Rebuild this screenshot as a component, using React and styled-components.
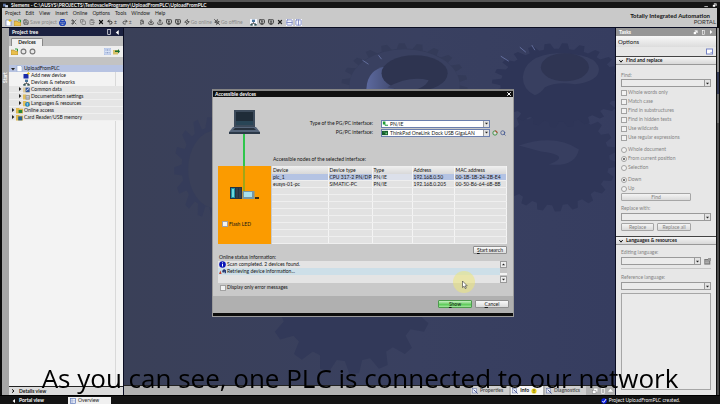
import React, { useState } from "react";
import styled, { createGlobalStyle, css } from "styled-components";
import {
  Scissors,
  Copy,
  ClipboardPaste,
  X,
  Undo2,
  Redo2,
  Download,
  Upload,
  Save,
  Printer,
  Columns2,
  Rows2,
  Zap,
  ZapOff,
  MonitorDown,
  MonitorUp,
  MonitorPlay,
  Binary,
  Search,
} from "lucide-react";

const GlobalStyle = createGlobalStyle`
  * {
    box-sizing: border-box;
  }
  body {
    margin: 0;
    background: #0c0c0c;
    color: #141414;
    font-family: Lato, "Liberation Sans", sans-serif;
    font-size: 5px;
    line-height: 7px;
    overflow: hidden;
  }
  button, input, select, textarea {
    font: inherit;
    color: inherit;
    margin: 0;
    padding: 0;
    border: 0;
    border-radius: 0;
    outline: none;
  }
  svg {
    display: block;
    flex: none;
  }
`;

const Page = styled.div`
  height: 100vh;
  display: flex;
  flex-direction: column;
`;

/* ---- window header ---- */

const TitleBar = styled.header`
  display: flex;
  align-items: center;
  gap: 3px;
  height: 8px;
  padding: 0 3px;
  border-top: 2px solid #555;
  background: #141414;
  color: #f2f2f2;
  font-weight: bold;
  line-height: 6px;
`;

const Spacer = styled.div`
  flex: 1;
`;

const TopArea = styled.div`
  display: flex;
  justify-content: space-between;
  height: 20px;
  margin: 0 3px 0 2px;
  background: #c9c9c9;
  border-bottom: 1px solid #0a0d22;
`;

const MenuBar = styled.nav`
  display: flex;
  gap: 5px;
  height: 10px;
  padding: 2px 3px 0;
`;

const MenuLink = styled.a`
  color: #1c1c1c;
  text-decoration: none;
`;

const ToolBar = styled.div`
  display: flex;
  align-items: center;
  gap: 2px;
  height: 8px;
  padding-left: 3px;
`;

const ToolButton = styled.button`
  display: flex;
  align-items: center;
  gap: 1px;
  height: 7px;
  min-width: 7px;
  background: ${(p) => (p.$on ? "#f4f6ff" : "none")};
  color: ${(p) => p.$color || "#4a4a4a"};
  white-space: nowrap;
`;

const Gap = styled.span`
  width: ${(p) => p.$w || 1}px;
`;

const Brand = styled.div`
  padding: 5px 4px 0 0;
  font-size: 6px;
  line-height: 6px;
  font-weight: bold;
  text-align: right;
`;

const BrandName = styled.div`
  padding-right: 3px;
`;

const BrandPortal = styled.div`
  margin-right: -3px;
  font-weight: normal;
  color: #333;
`;

/* ---- work area ---- */

const Work = styled.div`
  flex: 1;
  min-height: 0;
  display: flex;
  padding: 0 1px 0 2px;
`;

const StartStrip = styled.div`
  width: 7px;
  display: flex;
  align-items: center;
  background: #a6a6a6;
  color: #fff;
  writing-mode: vertical-rl;
  transform: rotate(180deg);
  font-weight: bold;
  justify-content: flex-end;
  padding-bottom: 44px;
`;

const TreePanel = styled.aside`
  flex: 0 0 115px;
  display: flex;
  flex-direction: column;
  background: #f3f3f3;
  border-right: 1px solid #0a0d22;
`;

const PanelHeader = styled.div`
  display: flex;
  align-items: center;
  gap: 3px;
  height: 8px;
  padding: 0 3px;
  background: ${(p) => (p.$muted ? "#969696" : "#1b2140")};
  color: #fff;
  font-weight: bold;
`;

const TabRow = styled.div`
  display: flex;
  align-items: flex-end;
  height: 10px;
  padding-left: 2px;
  background: #bebebe;
`;

const Tab = styled.button`
  height: 8px;
  width: 32px;
  background: #f0f0f0;
  border: 1px solid #888;
  border-bottom: 0;
  border-radius: 1px 2px 0 0;
  font-weight: bold;
  line-height: 7px;
`;

const TreeTools = styled.div`
  display: flex;
  align-items: center;
  gap: 2px;
  height: 11px;
  padding: 0 3px 0 2px;
  background: #efefef;
`;

const GreyBand = styled.div`
  height: 8px;
  background: #c3c3c3;
`;

const Tree = styled.ul`
  flex: 1;
  margin: 0;
  padding: 0 7px 0 0;
  list-style: none;
  background: linear-gradient(#d9d9d9, #d9d9d9) right 7px top / 1px 100% no-repeat;
`;

const TreeRow = styled.li`
  display: flex;
  align-items: center;
  gap: 1px;
  height: 7px;
  margin-right: -7px;
  padding-left: ${(p) => 2 + p.$level * 7}px;
  background: ${(p) => (p.$selected ? "#b7c3e2" : p.$shade ? "#e5e5e5" : "transparent")};
  border-bottom: ${(p) => (p.$shade ? "1px solid #f0f0f0" : "0")};
  white-space: nowrap;
`;

const DetailsRow = styled.div`
  display: flex;
  align-items: center;
  gap: 4px;
  height: 9px;
  padding-left: 2px;
  background: #dcdcdc;
  border-top: 1px solid #222;
  font-weight: bold;
`;

const Centre = styled.main`
  flex: 1;
  min-width: 0;
  display: flex;
  flex-direction: column;
`;

const Canvas = styled.div`
  flex: 1;
  min-height: 0;
  overflow: hidden;
  background: linear-gradient(90deg, #3a4058 0%, #394060 60%, #363d60 100%);
`;

const InfoBar = styled.div`
  display: flex;
  justify-content: flex-end;
  align-items: stretch;
  gap: 2px;
  height: 10px;
  padding-right: 2px;
  background: #b2b2b2;
  border-top: 1px solid #222;
`;

const InfoTab = styled.button`
  display: flex;
  align-items: center;
  gap: 2px;
  padding: 0 6px 0 1px;
  background: ${(p) => (p.$active ? "#f6f6f6" : "#cfcfcf")};
  color: ${(p) => (p.$active ? "#111" : "#555")};
  font-weight: bold;
`;

const InfoTools = styled.div`
  display: flex;
  align-items: center;
  gap: 2px;
  padding-left: 4px;
`;

/* ---- tasks panel ---- */

const TasksPanel = styled.aside`
  flex: 0 0 101px;
  display: flex;
  flex-direction: column;
  background: #e7e7e7;
  border-left: 1px solid #0a0d22;
`;

const OptionsTitle = styled.div`
  height: 11px;
  padding: 2px 2px 0;
  background: linear-gradient(#f8f8f8, #dcdcdc);
  font-size: 6px;
  line-height: 8px;
`;

const OptionsTools = styled.div`
  display: flex;
  justify-content: flex-end;
  align-items: center;
  height: 9px;
  padding-right: 3px;
`;

const SectionTitle = styled.h2`
  display: flex;
  align-items: center;
  gap: 3px;
  height: 9px;
  margin: 0;
  padding: 0 3px;
  background: linear-gradient(#f4f4f4, #d8d8d8);
  border-top: 1px solid #444;
  border-bottom: 1px solid #999;
  font-size: 5px;
  line-height: 7px;
`;

const Form = styled.form`
  display: flex;
  flex-direction: column;
  padding: ${(p) => p.$top}px 5px ${(p) => p.$bottom || 0}px;
  color: #848484;
`;

const FieldLabel = styled.label`
  height: 7px;
  margin-bottom: ${(p) => p.$mb || 0}px;
`;

const FieldRow = styled.div`
  display: flex;
  align-items: center;
  gap: 3px;
`;

const ComboBox = styled.div`
  flex: 1;
  display: flex;
  align-items: center;
  height: 8px;
  border: 1px solid ${(p) => (p.$active ? "#6b7fae" : "#9a9a9a")};
  background: ${(p) => (p.$active ? "#fff" : "#ebebeb")};

  select {
    flex: 1;
    min-width: 0;
    height: 6px;
    padding-left: 2px;
    appearance: none;
    background: none;
    line-height: 6px;
  }
`;

const ComboArrow = styled.span`
  display: flex;
  align-items: center;
  justify-content: center;
  width: 6px;
  align-self: stretch;
  border-left: 1px solid #9a9a9a;
  background: #e2e2e2;
`;

const Choices = styled.fieldset`
  display: flex;
  flex-direction: column;
  margin: 0;
  padding: ${(p) => p.$pad || 1}px 0 0;
  border: 0;
`;

const Choice = styled.label`
  display: flex;
  align-items: center;
  gap: 1px;
  height: 9px;
`;

const Mark = styled.input`
  appearance: none;
  width: 6px;
  height: 6px;
  border: 1px solid #a2a2a2;
  background: #f2f2f2;

  &[type="radio"] {
    border-radius: 50%;
  }
  &[type="radio"]:checked {
    background: radial-gradient(circle, #777 0 1px, #f2f2f2 1px);
  }
`;

const buttonLook = css`
  height: 8px;
  border: 1px solid #a6a6a6;
  border-radius: 1px;
  background: linear-gradient(#f4f4f4, #dadada);
  line-height: 6px;
  text-align: center;
`;

const FormButton = styled.button`
  ${buttonLook}
  width: ${(p) => p.$w}px;
`;

const Rule = styled.hr`
  width: 100%;
  margin: 3px 0 5px;
  border: 0;
  border-top: 1px solid #c6c6c6;
`;

const LanguageBox = styled.textarea`
  flex: 1;
  min-height: 0;
  margin: 3px 5px 5px;
  border: 1px solid #a6a6a6;
  background: #eaeaea;
  resize: none;
`;

const SideTabs = styled.div`
  width: 3px;
  background: linear-gradient(#8d8d8d 0 12%, #323854 12% 18%, #6e6e6e 18% 26%, #4a4a4a 26%);
  border-left: 1px solid #111;
`;

/* ---- bottom line ---- */

const StatusBar = styled.footer`
  display: flex;
  align-items: center;
  height: 9px;
  padding: 1px 40px 0 12px;
  background: #131313;
  border-top: 1px solid #000;
  color: #eee;
`;

const PortalLink = styled.a`
  display: flex;
  align-items: center;
  gap: 3px;
  width: 56px;
  color: #fff;
  font-weight: bold;
  text-decoration: none;
`;

const OverviewTab = styled.button`
  display: flex;
  align-items: center;
  gap: 2px;
  width: 43px;
  height: 7px;
  padding-left: 2px;
  background: #f0f0f0;
  color: #222;
`;

const StatusText = styled.div`
  display: flex;
  align-items: center;
  gap: 2px;
`;

/* ---- dialog ---- */

const Overlay = styled.div`
  position: fixed;
  inset: 0;
  display: flex;
  align-items: center;
  justify-content: center;
  padding: 2px 0 0 6px;
`;

const Dialog = styled.section`
  width: 302px;
  max-width: 100%;
  background: #c9c9c9;
  border: 1px solid #9a9a9a;
  border-top: 2px solid #858585;
`;

const DialogTitle = styled.div`
  display: flex;
  align-items: center;
  justify-content: space-between;
  height: 6px;
  padding: 0 1px 0 2px;
  background: #101010;
  color: #fff;
  font-weight: bold;
  line-height: 6px;
`;

const CloseButton = styled.button`
  display: flex;
  background: none;
  color: #fff;
`;

const DialogBody = styled.div`
  display: grid;
  grid-template-columns: 53px 1fr;
  column-gap: 1px;
  padding: 1px 6px 0 5px;
`;

const Station = styled.div`
  display: flex;
  flex-direction: column;
`;

const StationZone = styled.div`
  height: 78px;
  background: #fb9b00;
`;

const FlashLabel = styled(Choice)`
  padding: 2px 0 0 4px;
  margin-top: 19px;
`;

const Nodes = styled.div`
  display: flex;
  flex-direction: column;
`;

const InterfaceGrid = styled.div`
  display: grid;
  grid-template-columns: 1fr 109px 17px;
  align-items: center;
  align-content: start;
  row-gap: 1px;
  height: 57px;
  padding-top: 22px;
`;

const InterfaceLabel = styled.label`
  padding-right: 8px;
  text-align: right;
`;

const IconPair = styled.div`
  display: flex;
  align-items: center;
  gap: 2px;
  padding-left: 2px;
`;

const NodesCaption = styled.div`
  height: 11px;
  padding: 1px 0 0 1px;
`;

const NodeTable = styled.table`
  width: 100%;
  height: 78px;
  table-layout: fixed;
  border-collapse: collapse;
  background: #e2e2e2;
`;

const HeadCell = styled.th`
  width: ${(p) => (p.$w ? p.$w + "px" : "auto")};
  height: 8px;
  padding: 0 1px;
  background: linear-gradient(#f0f0f0, #d8d8d8);
  border-right: 1px solid #f4f4f4;
  font-weight: normal;
  text-align: left;
  line-height: 6px;
`;

const Cell = styled.td`
  height: 7px;
  padding: 0 1px;
  border-right: 1px solid #f4f4f4;
  border-bottom: 1px solid #efefef;
  background: ${(p) => (p.$selected ? (p.$focus ? "#dce0ea" : "#b4c3e3") : "none")};
  line-height: 6px;
  white-space: nowrap;
`;

const SearchRow = styled.div`
  display: flex;
  justify-content: flex-end;
  padding: 2px 6px 0 0;
`;

const DialogButton = styled.button`
  ${buttonLook}
  width: 34px;
  border-color: ${(p) => (p.$primary ? "#4d9b4d" : "#8f8f8f")};
  background: ${(p) =>
    p.$primary
      ? "linear-gradient(#c9f0c4, #5ecb5a 60%, #a4e89e)"
      : "linear-gradient(#f8f8f8, #dcdcdc)"};

  &::first-letter {
    text-decoration: underline;
  }
`;

const StatusBlock = styled.div`
  padding: 0 6px 4px 5px;
`;

const StatusCaption = styled.div`
  height: 7px;
  padding-left: 1px;
`;

const MessageBox = styled.div`
  display: flex;
  height: 22px;
  background: #e4e4e4;
`;

const Messages = styled.ul`
  flex: 1;
  margin: 0;
  padding: 0;
  list-style: none;
`;

const Message = styled.li`
  display: flex;
  align-items: center;
  gap: 1px;
  height: 7px;
  padding-left: 1px;
  background: ${(p) => (p.$active ? "#cddfe8" : "transparent")};
`;

const ScrollBar = styled.div`
  width: 7px;
  display: flex;
  flex-direction: column;
  justify-content: space-between;
  background: #c4c4c4;
`;

const ScrollButton = styled.button`
  display: flex;
  align-items: center;
  justify-content: center;
  height: 7px;
  border: 1px solid #999;
  background: #eee;
`;

const ScrollThumb = styled.div`
  height: 2px;
  background: #f2f2f2;
  margin-top: 3px;
`;

const DialogFooter = styled.div`
  display: flex;
  justify-content: flex-end;
  gap: 3px;
  height: 20px;
  padding: 4px 4px 0;
  background: #b0b0b0;
  border-bottom: 3px solid #0c0c0c;
`;

/* ---- things over the page ---- */

const Pointer = styled.div`
  position: fixed;
  left: 452px;
  top: 271px;
  pointer-events: none;
`;

const Caption = styled.p`
  position: fixed;
  left: 0;
  right: 0;
  bottom: 8px;
  margin: 0;
  color: #000;
  font-family: "Open Sans", "Noto Sans", sans-serif;
  font-size: 26px;
  line-height: 36px;
  text-align: center;
  white-space: nowrap;
  pointer-events: none;
`;

const Arrow = ({ dir = "right", color = "#222", size = 4 }) => {
  const turn = { right: 0, down: 90, left: 180, up: 270 }[dir];
  return (
    <svg width={size} height={size} viewBox="0 0 4 4" aria-hidden="true">
      <path d="M1 0 L3.4 2 L1 4 Z" fill={color} transform={`rotate(${turn} 2 2)`} />
    </svg>
  );
};

const Chevron = ({ dir = "right" }) => (
  <svg width="4" height="4" viewBox="0 0 4 4" aria-hidden="true">
    <path
      d={dir === "down" ? "M0.3 1 L2 3.2 L3.7 1" : "M1 0.3 L3 2 L1 3.7"}
      fill="none"
      stroke="#111"
      strokeWidth="1"
    />
  </svg>
);

// small colour icons, all on a 7 x 7 grid
const glyphs = {
  app: (
    <>
      <rect x="0" y="1" width="4" height="4" fill="#5b74a8" />
      <rect x="3" y="3" width="4" height="3" fill="#cbd5ea" />
    </>
  ),
  newProject: (
    <>
      <path d="M1 1h4l1 1v5H1z" fill="#fff" stroke="#5870a8" strokeWidth=".6" />
      <path d="M5 0v3M3.5 1.5h3" stroke="#e8b800" strokeWidth="1" />
    </>
  ),
  open: (
    <>
      <path d="M0 2h3l1 1h3v4H0z" fill="#e9bf4c" stroke="#9a762a" strokeWidth=".5" />
      <path d="M4 1h2.5v2.2" stroke="#2f9c3a" strokeWidth="1" fill="none" />
    </>
  ),
  page: <path d="M1 .5h3.5L6 2v4.7H1z" fill="#fff" stroke="#8fa4cc" strokeWidth=".6" />,
  addDevice: (
    <>
      <rect x="0.5" y="2" width="5" height="4.5" fill="#1a2ca8" />
      <path d="M5.4 0v3M3.9 1.5h3" stroke="#e0bb1c" strokeWidth=".9" />
    </>
  ),
  network: (
    <>
      <rect x="2" y="0.6" width="3" height="2.4" fill="#49759a" />
      <path d="M3.5 3v1.5M1.5 5.5v-1h4v1" stroke="#333" strokeWidth=".6" fill="none" />
      <rect x="0.3" y="5" width="2.4" height="1.7" fill="#355" />
      <rect x="4.3" y="5" width="2.4" height="1.7" fill="#355" />
    </>
  ),
  common: (
    <>
      <path d="M0 1.4h3l.7.8H7v4.4H0z" fill="#d9c89a" />
      <rect x="2.6" y="1.6" width="4" height="4.6" fill="#31569e" />
      <path d="M3.3 4.5L6 2.5" stroke="#fff" strokeWidth=".8" />
    </>
  ),
  docs: (
    <>
      <path d="M0 1.4h3l.7.8H7v4.4H0z" fill="#e2be5a" />
      <rect x="2.6" y="2.2" width="4" height="4.4" fill="#8b94a8" />
      <path d="M3.4 3.6h2.4M3.4 5h2.4" stroke="#fff" strokeWidth=".6" />
    </>
  ),
  languages: (
    <>
      <path d="M0 1h3l.7.8H7v4.4H0z" fill="#e2be5a" />
      <circle cx="4.4" cy="4.4" r="2.3" fill="#1f83bf" />
      <path d="M3.4 4h2M4.4 3v3" stroke="#c4ecff" strokeWidth=".5" />
    </>
  ),
  online: (
    <>
      <path d="M0 1h3l.7.8H7v4.8H0z" fill="#dfb84c" />
      <rect x="2.6" y="3" width="3.6" height="3" fill="#28863a" />
    </>
  ),
  card: (
    <>
      <path d="M0 1h3l.7.8H7v4.8H0z" fill="#dfb84c" />
      <rect x="2.2" y="2.4" width="4" height="4" fill="#27608c" />
    </>
  ),
  detailView: (
    <>
      <rect x="0" y="0" width="7" height="7" fill="#d8e2f6" stroke="#8ba2d4" strokeWidth=".6" />
      <path d="M1.5 2h1M3 2h1M4.6 2h1M1.5 4.8h1M3 4.8h1M4.6 4.8h1" stroke="#6880b4" strokeWidth=".9" />
    </>
  ),
  goTo: (
    <>
      <rect x="0" y="2" width="5" height="4.5" fill="#d7c169" />
      <path d="M2 2.6h3V1l2 2.4-2 2V4H2z" fill="#176b2b" />
    </>
  ),
  circle: <circle cx="3.5" cy="3.5" r="2.4" fill="#e8e8e8" stroke="#777" strokeWidth="1.1" />,
  window: (
    <>
      <rect x="2.4" y=".6" width="4" height="3.6" fill="#fff" />
      <rect x=".6" y="2.6" width="4" height="3.6" fill="#fff" stroke="#777" strokeWidth=".5" />
    </>
  ),
  dock: <rect x="2" y=".7" width="3" height="5.6" fill="none" stroke="#fff" strokeWidth=".8" />,
  sheet: (
    <>
      <rect x=".5" y="1" width="6" height="5" fill="#fff" stroke="#7482c4" strokeWidth="1" />
      <path d="M4.4 4.4h2" stroke="#7482c4" strokeWidth=".7" />
    </>
  ),
  lang: (
    <>
      <rect x=".3" y="1" width="6" height="5.6" fill="#777" />
      <path d="M1.2 3h4M1.2 4.8h4" stroke="#e8e8e8" strokeWidth=".7" />
      <rect x="4" y="0" width="3" height="3" fill="#999" />
    </>
  ),
  plug: <path d="M1 .5h3v4h3v1H3.4L3 4H1z" fill="#1c9c36" />,
  board: (
    <>
      <rect x="0" y="1" width="7" height="5" fill="#145c2c" />
      <path d="M2 2h1v1H2zM4 3h2v2H4z" fill="#6fd07b" />
    </>
  ),
  ring: (
    <>
      <circle cx="3.5" cy="3.5" r="2.5" fill="#ddd" stroke="#2f8a36" strokeWidth="1" />
      <path d="M3.5 1A2.5 2.5 0 0 1 6 3.5" stroke="#c83a2a" strokeWidth="1.1" fill="none" />
    </>
  ),
  info: (
    <>
      <circle cx="3.5" cy="3.5" r="3.3" fill="#0a16b8" />
      <path d="M3.5 3v2.5M3.5 1.4v.9" stroke="#fff" strokeWidth="1" />
    </>
  ),
  retrieve: (
    <>
      <path d="M0 6l1.4-3.6L2.6 6z" fill="#c24330" />
      <path d="M3 3l2-2 2 1.2v3H5.6V3.6L4 5z" fill="#283a74" />
    </>
  ),
  props: (
    <>
      <rect x=".5" y=".8" width="5" height="5" fill="#e8ebf6" stroke="#5a6ba4" strokeWidth=".6" />
      <path d="M2 2l2 2M3.8 3.8L6.6 6.4" stroke="#2a3a7c" strokeWidth=".9" />
    </>
  ),
  warn: (
    <>
      <circle cx="3.5" cy="3.5" r="3" fill="#e5cc16" />
      <path d="M3.5 1.6v2.4M3.5 4.7v.9" stroke="#333" strokeWidth=".9" />
    </>
  ),
  overview: (
    <>
      <rect x=".4" y=".6" width="6" height="5.8" fill="#fff" stroke="#5c76b8" strokeWidth=".8" />
      <path d="M2.4 .6v5.8M.4 2.6h6M.4 4.6h6" stroke="#5c76b8" strokeWidth=".5" />
    </>
  ),
  check: (
    <>
      <circle cx="3.5" cy="3.5" r="3.2" fill="#0a1ee0" />
      <path d="M1.6 3.5l1.5 1.6L6 1.2" stroke="#fff" strokeWidth="1.1" fill="none" />
    </>
  ),
  restore: (
    <>
      <rect x="2.6" y=".6" width="3.8" height="3.4" fill="#fff" />
      <rect x="1" y="2.4" width="3.6" height="3.2" fill="#fff" stroke="#141414" strokeWidth=".6" />
    </>
  ),
  minimise: <path d="M.5 5h5" stroke="#fff" strokeWidth="1" />,
};

const Glyph = ({ name, size = 7 }) => (
  <svg width={size} height={size} viewBox="0 0 7 7" aria-hidden="true">
    {glyphs[name]}
  </svg>
);

const Combo = ({ id, icon, active, children }) => (
  <ComboBox $active={active}>
    {icon && <Glyph name={icon} size={6} />}
    <select id={id}>{children}</select>
    <ComboArrow>
      <Arrow dir="down" size={3} />
    </ComboArrow>
  </ComboBox>
);

// outline of a gear wheel seen at an angle
const gearPath = (cx, cy, rx, ry, teeth, depth = 0.14) => {
  const points = [];
  for (let i = 0; i < teeth; i++) {
    [
      [0, 1 - depth],
      [0.18, 1],
      [0.5, 1],
      [0.68, 1 - depth],
    ].forEach(([t, r]) => {
      const a = ((i + t) / teeth) * Math.PI * 2;
      points.push(`${(cx + Math.cos(a) * rx * r).toFixed(1)} ${(cy + Math.sin(a) * ry * r).toFixed(1)}`);
    });
  }
  return `M${points.join("L")}Z`;
};

const Gears = () => (
  <svg width="100%" height="100%" viewBox="0 0 490 358" preserveAspectRatio="xMidYMid slice" aria-hidden="true">
    <defs>
      <linearGradient id="shine" x1="0" x2="1">
        <stop offset="0" stopColor="#5c699e" />
        <stop offset="1" stopColor="#3b4365" />
      </linearGradient>
    </defs>
    <path d={gearPath(225, 262, 86, 84, 18, 0.15)} fill="#323959" />
    <path d={gearPath(84, 140, 34, 50, 15, 0.22)} fill="#353c5a" />
    <ellipse cx="92" cy="142" rx="28" ry="39" fill="#3a4059" />
    <path d={gearPath(280, 58, 63, 42, 22, 0.13)} fill="#343b59" />
    <ellipse cx="280" cy="58" rx="55" ry="36" fill="#394060" />
    <path d="M242 61 Q243 42 262 39 L275 50 L265 70 H248 Z" fill="url(#shine)" />
    <ellipse cx="290" cy="46" rx="33" ry="18" fill="#2e3450" />
    <path d="M263 60 Q285 48 304 53 Q300 62 282 64Z" fill="#3b4262" />
    <path d={gearPath(430, 132, 62, 52, 22, 0.12)} fill="#2f3658" />
    <path d={gearPath(434, 58, 67, 42, 24, 0.13)} fill="#2e3557" />
    <path d="M398 50 Q400 28 432 26 Q472 26 474 42 Q474 54 450 57 Q432 54 420 60 Q416 66 410 68 Q398 62 398 50Z" fill="#383f60" />
    <ellipse cx="440" cy="40" rx="24" ry="14" fill="#2f3553" />
    <path d="M394 118 Q430 106 454 122 Q450 140 424 137 Q448 128 416 124Z" fill="#373e60" />
    <path d="M238 33l6 4M254 28l3 4M395 20l6 5M407 18l3 5M376 29l8 5" stroke="#7481b4" strokeWidth=".7" />
  </svg>
);

const Laptop = () => (
  <svg width="53" height="68" viewBox="0 0 53 68" aria-hidden="true">
    <path d="M25 36h2v32h-2z" fill="#2fc64c" />
    <path d="M16 12h21v17H16z" fill="#3c4a5a" />
    <path d="M18 14h17v13H18z" fill="#1f2c38" />
    <path d="M18 23h17v4H18z" fill="#294556" />
    <path d="M15 29h23l4 5H11z" fill="#56657a" />
    <path d="M17 30h19l2 2H15z" fill="#28323e" />
    <path d="M11 34h31v2H11z" fill="#2c3948" />
  </svg>
);

const Plc = () => (
  <svg width="53" height="34" viewBox="0 0 53 34" aria-hidden="true">
    <path d="M25 0h2v25h-2z" fill="#a0a616" />
    <path d="M12 21h12v12H12z" fill="#26323f" />
    <path d="M13 22h4v10h-4z" fill="#1d91a4" />
    <path d="M14 23h2v8h-2z" fill="#6cd6dc" />
    <path d="M19 22v10M22 22v10" stroke="#4a5765" strokeWidth=".7" />
    <path d="M24.5 25h12v8h-12z" fill="#7697a6" />
    <path d="M26 26h8v5h-8z" fill="#a9e1ee" />
    <path d="M37 31h4v2h-4z" fill="#3d2c10" />
  </svg>
);

const tree = [
  { text: "UploadFromPLC", icon: "page", level: 0, open: true, selected: true },
  { text: "Add new device", icon: "addDevice", level: 1, leaf: true },
  { text: "Devices & networks", icon: "network", level: 1, leaf: true },
  { text: "Common data", icon: "common", level: 1, shade: true },
  { text: "Documentation settings", icon: "docs", level: 1, shade: true },
  { text: "Languages & resources", icon: "languages", level: 1, shade: true },
  { text: "Online access", icon: "online", level: 0, shade: true },
  { text: "Card Reader/USB memory", icon: "card", level: 0, shade: true },
];

const menus = ["Project", "Edit", "View", "Insert", "Online", "Options", "Tools", "Window", "Help"];

const findOptions = [
  "Whole words only",
  "Match case",
  "Find in substructures",
  "Find in hidden texts",
  "Use wildcards",
  "Use regular expressions",
];

const devices = [
  ["plc_1", "CPU 317-2 PN/DP", "PN/IE", "192.168.0.50", "00-1B-1B-24-2B-E4"],
  ["eusys-01-pc", "SIMATIC-PC", "PN/IE", "192.168.0.205", "00-50-B6-64-6B-8B"],
];

const columns = [
  ["Device", 56],
  ["Device type", 44],
  ["Type", 40],
  ["Address", 42],
  ["MAC address", 0],
];

const Header = () => (
  <>
    <TitleBar>
      <Glyph name="app" size={5} />
      Siemens - C:\AUSYS\PROJECTS\TestovacieProgramy\UploadFromPLC\UploadFromPLC
      <Spacer />
      <Glyph name="minimise" size={5} />
      <Glyph name="restore" size={5} />
    </TitleBar>
    <TopArea>
      <div>
        <MenuBar>
          {menus.map((m) => (
            <MenuLink key={m} href="#">
              {m}
            </MenuLink>
          ))}
        </MenuBar>
        <ToolBar>
          <ToolButton aria-label="New project">
            <Glyph name="newProject" />
          </ToolButton>
          <ToolButton aria-label="Open project">
            <Glyph name="open" />
          </ToolButton>
          <ToolButton $color="#8a8a8a">
            <Save size={6} strokeWidth={3} color="#555" />
            Save project
          </ToolButton>
          <ToolButton aria-label="Print" $color="#2146b8">
            <Printer size={7} strokeWidth={4} />
          </ToolButton>
          <Gap />
          <ToolButton aria-label="Cut">
            <Scissors size={6} strokeWidth={3} />
          </ToolButton>
          <ToolButton aria-label="Copy" $color="#777">
            <Copy size={6} strokeWidth={3} />
          </ToolButton>
          <ToolButton aria-label="Paste" $color="#777">
            <ClipboardPaste size={6} strokeWidth={3} />
          </ToolButton>
          <ToolButton aria-label="Delete" $color="#111">
            <X size={6} strokeWidth={5} />
          </ToolButton>
          <ToolButton aria-label="Undo" $color="#333">
            <Undo2 size={6} strokeWidth={4} />±
          </ToolButton>
          <Gap />
          <ToolButton aria-label="Redo" $color="#555">
            <Redo2 size={6} strokeWidth={4} />±
          </ToolButton>
          <Gap $w={3} />
          <ToolButton aria-label="Compile">
            <Binary size={6} strokeWidth={3} />
          </ToolButton>
          <ToolButton aria-label="Download to device">
            <Download size={6} strokeWidth={4} />
          </ToolButton>
          <ToolButton aria-label="Upload from device">
            <Upload size={6} strokeWidth={4} />
          </ToolButton>
          <ToolButton aria-label="Start simulation">
            <MonitorPlay size={6} strokeWidth={4} />
          </ToolButton>
          <ToolButton aria-label="Start runtime">
            <MonitorUp size={6} strokeWidth={4} />
          </ToolButton>
          <ToolButton $color="#8a8a8a">
            <Zap size={6} strokeWidth={4} color="#555" />
            Go online
          </ToolButton>
          <ToolButton $color="#8a8a8a">
            <ZapOff size={6} strokeWidth={4} color="#555" />
            Go offline
          </ToolButton>
          <Gap $w={3} />
          <ToolButton $on aria-label="Accessible devices">
            <Glyph name="network" />
          </ToolButton>
          <ToolButton aria-label="Start CPU">
            <MonitorUp size={6} strokeWidth={4} />
          </ToolButton>
          <ToolButton aria-label="Stop CPU">
            <MonitorDown size={6} strokeWidth={4} />
          </ToolButton>
          <ToolButton aria-label="Cross-references" $color="#222">
            <X size={6} strokeWidth={5} />
          </ToolButton>
          <ToolButton $on aria-label="Split horizontally" $color="#7a86c0">
            <Rows2 size={7} strokeWidth={3} />
          </ToolButton>
          <ToolButton $on aria-label="Split vertically" $color="#7a86c0">
            <Columns2 size={7} strokeWidth={3} />
          </ToolButton>
        </ToolBar>
      </div>
      <Brand>
        <BrandName>Totally Integrated Automation</BrandName>
        <BrandPortal>PORTAL</BrandPortal>
      </Brand>
    </TopArea>
  </>
);

const ProjectTree = () => (
  <TreePanel>
    <PanelHeader>
      Project tree
      <Spacer />
      <Glyph name="dock" size={6} />
      <Arrow dir="left" color="#fff" size={5} />
    </PanelHeader>
    <TabRow>
      <Tab>Devices</Tab>
    </TabRow>
    <TreeTools>
      <Glyph name="open" />
      <Glyph name="circle" />
      <Glyph name="circle" />
      <Spacer />
      <Glyph name="detailView" />
      <Glyph name="goTo" />
    </TreeTools>
    <GreyBand />
    <Tree>
      {tree.map((row) => (
        <TreeRow key={row.text} $level={row.level} $selected={row.selected} $shade={row.shade}>
          {row.leaf ? <Gap $w={4} /> : <Arrow dir={row.open ? "down" : "right"} />}
          <Glyph name={row.icon} />
          {row.text}
        </TreeRow>
      ))}
    </Tree>
    <DetailsRow>
      <Chevron />
      Details view
    </DetailsRow>
  </TreePanel>
);

const Tasks = () => {
  const [scope, setScope] = useState("From current position");
  const [direction, setDirection] = useState("Down");

  return (
    <TasksPanel>
      <PanelHeader $muted>
        Tasks
        <Spacer />
        <Glyph name="window" size={5} />
        <Glyph name="dock" size={5} />
        <Arrow color="#fff" />
      </PanelHeader>
      <OptionsTitle>Options</OptionsTitle>
      <OptionsTools>
        <Glyph name="sheet" />
      </OptionsTools>
      <SectionTitle>
        <Chevron dir="down" />
        Find and replace
      </SectionTitle>
      <Form $top={7} $bottom={5}>
        <FieldLabel htmlFor="find">Find:</FieldLabel>
        <Combo id="find" />
        <Choices $pad={1}>
          {findOptions.map((o) => (
            <Choice key={o}>
              <Mark type="checkbox" />
              {o}
            </Choice>
          ))}
        </Choices>
        <Choices $pad={3}>
          {["Whole document", "From current position", "Selection"].map((o) => (
            <Choice key={o}>
              <Mark type="radio" name="scope" checked={scope === o} onChange={() => setScope(o)} />
              {o}
            </Choice>
          ))}
        </Choices>
        <Choices $pad={3}>
          {["Down", "Up"].map((o) => (
            <Choice key={o}>
              <Mark type="radio" name="direction" checked={direction === o} onChange={() => setDirection(o)} />
              {o}
            </Choice>
          ))}
        </Choices>
        <FormButton type="button" $w={70}>
          Find
        </FormButton>
        <Choices as="div" $pad={4}>
          <FieldLabel htmlFor="replace" $mb={1}>
            Replace with:
          </FieldLabel>
          <Combo id="replace" />
        </Choices>
        <Choices as="div" $pad={2}>
          <FieldRow>
            <FormButton type="button" $w={33}>
              Replace
            </FormButton>
            <FormButton type="button" $w={34}>
              Replace all
            </FormButton>
          </FieldRow>
        </Choices>
      </Form>
      <SectionTitle>
        <Chevron dir="down" />
        Languages &amp; resources
      </SectionTitle>
      <Form $top={4}>
        <FieldLabel htmlFor="editing" $mb={1}>
          Editing language:
        </FieldLabel>
        <FieldRow>
          <Combo id="editing" />
          <Glyph name="lang" />
        </FieldRow>
        <Rule />
        <FieldLabel htmlFor="reference" $mb={1}>
          Reference language:
        </FieldLabel>
        <FieldRow>
          <Combo id="reference" />
        </FieldRow>
      </Form>
      <LanguageBox aria-label="Reference text" />
    </TasksPanel>
  );
};

const AccessibleDevices = () => (
  <Dialog role="dialog" aria-label="Accessible devices">
    <DialogTitle>
      Accessible devices
      <CloseButton aria-label="Close">
        <X size={6} strokeWidth={4} />
      </CloseButton>
    </DialogTitle>
    <DialogBody>
      <Station>
        <Laptop />
        <StationZone>
          <Plc />
          <FlashLabel>
            <Mark type="checkbox" />
            Flash LED
          </FlashLabel>
        </StationZone>
      </Station>
      <Nodes>
        <InterfaceGrid>
          <InterfaceLabel htmlFor="pgType">Type of the PG/PC interface:</InterfaceLabel>
          <Combo id="pgType" icon="plug" active>
            <option>PN/IE</option>
          </Combo>
          <span />
          <InterfaceLabel htmlFor="pgInterface">PG/PC interface:</InterfaceLabel>
          <Combo id="pgInterface" icon="board" active>
            <option>ThinkPad OneLink Dock USB GigaLAN</option>
          </Combo>
          <IconPair>
            <Glyph name="ring" size={6} />
            <Search size={6} strokeWidth={3} color="#3c518e" />
          </IconPair>
        </InterfaceGrid>
        <NodesCaption>Accessible nodes of the selected interface:</NodesCaption>
        <NodeTable>
          <thead>
            <tr>
              {columns.map(([name, w]) => (
                <HeadCell key={name} $w={w}>
                  {name}
                </HeadCell>
              ))}
            </tr>
          </thead>
          <tbody>
            {Array.from({ length: 10 }, (_, r) => (
              <tr key={r}>
                {columns.map(([name], c) => (
                  <Cell key={name} $selected={r === 0} $focus={c === 2}>
                    {devices[r]?.[c]}
                  </Cell>
                ))}
              </tr>
            ))}
          </tbody>
        </NodeTable>
      </Nodes>
    </DialogBody>
    <SearchRow>
      <DialogButton>Start search</DialogButton>
    </SearchRow>
    <StatusBlock>
      <StatusCaption>Online status information:</StatusCaption>
      <MessageBox>
        <Messages>
          <Message>
            <Glyph name="info" />
            Scan completed. 2 devices found.
          </Message>
          <Message $active>
            <Glyph name="retrieve" />
            Retrieving device information...
          </Message>
        </Messages>
        <ScrollBar>
          <ScrollButton aria-label="Scroll up">
            <Arrow dir="up" size={3} />
          </ScrollButton>
          <ScrollThumb />
          <ScrollButton aria-label="Scroll down">
            <Arrow dir="down" size={3} />
          </ScrollButton>
        </ScrollBar>
      </MessageBox>
      <Choice>
        <Gap />
        <Mark type="checkbox" />
        Display only error messages
      </Choice>
    </StatusBlock>
    <DialogFooter>
      <DialogButton $primary>Show</DialogButton>
      <DialogButton>Cancel</DialogButton>
    </DialogFooter>
  </Dialog>
);

const App = () => (
  <>
    <GlobalStyle />
    <Page>
      <Header />
      <Work>
        <StartStrip>Start</StartStrip>
        <ProjectTree />
        <Centre>
          <Canvas>
            <Gears />
          </Canvas>
          <InfoBar>
            <InfoTab>
              <Glyph name="props" size={6} />
              Properties
            </InfoTab>
            <InfoTab $active>
              <Glyph name="props" size={6} />
              Info
              <Glyph name="warn" size={6} />
            </InfoTab>
            <InfoTab>
              <Glyph name="props" size={6} />
              Diagnostics
            </InfoTab>
            <InfoTools>
              <Glyph name="window" size={6} />
              <Glyph name="dock" size={6} />
              <Arrow dir="up" color="#fff" size={5} />
            </InfoTools>
          </InfoBar>
        </Centre>
        <Tasks />
        <SideTabs />
      </Work>
      <StatusBar>
        <PortalLink href="#">
          <Arrow dir="left" color="#fff" />
          Portal view
        </PortalLink>
        <OverviewTab>
          <Glyph name="overview" size={6} />
          Overview
        </OverviewTab>
        <Spacer />
        <StatusText>
          <Glyph name="check" size={6} />
          Project UploadFromPLC created.
        </StatusText>
      </StatusBar>
    </Page>
    <Overlay>
      <AccessibleDevices />
    </Overlay>
    <Pointer>
      <svg width="24" height="24" viewBox="0 0 24 24" aria-hidden="true">
        <circle cx="12" cy="11" r="11" fill="#ece57a" fillOpacity=".55" />
        <path d="M10.5 10v6.6l1.6-1.4 1.2 2.4 1-.5-1.1-2.3h2z" fill="#fff" stroke="#333" strokeWidth=".6" />
      </svg>
    </Pointer>
    <Caption>As you can see, one PLC is connected to our network</Caption>
  </>
);

export default App;
